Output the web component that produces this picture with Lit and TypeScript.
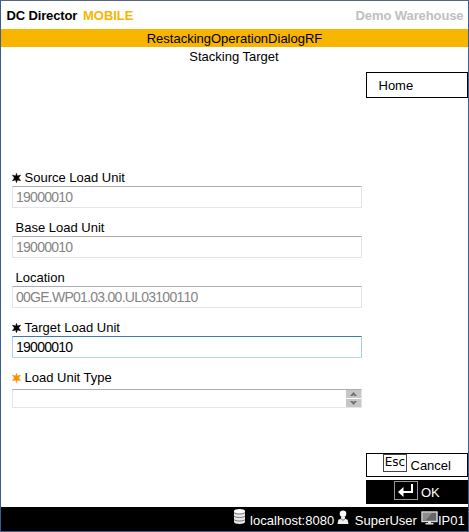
import { LitElement, html, css, nothing } from "lit";
import { customElement, property } from "lit/decorators.js";

const star = (color: string) => html`<svg class="star" width="9" height="10" viewBox="0 0 9 10">
  <path fill=${color} stroke=${color} stroke-width=".5" stroke-linejoin="round" d="M4.5 .3 5.4 2.9 8.6 2.1 6.6 4.9 8.6 7.7 5.4 7 4.5 9.7 3.6 7 .4 7.7 2.4 4.9 .4 2.1 3.6 2.9Z"/>
</svg>`;

@customElement("load-field")
class LoadField extends LitElement {
  @property() label = "";
  @property() value = "";
  @property() mark = "";
  @property() kind = "disabled";

  static styles = css`
    :host { display: block; height: 50px; }
    .label { display: flex; align-items: center; height: 16px; gap: 3.5px; padding-left: 3.5px; white-space: nowrap; }
    .label.marked { padding-left: 0; }
    .star { display: block; margin-top: -1px; }
    .box { box-sizing: border-box; width: 350px; height: 22px; padding-left: 3px;
      border: 1px solid #e3e3eb; border-top-color: #abadb3; border-radius: 1px; background: #fff;
      color: #858585; font-size: 14px; line-height: 21px; letter-spacing: -0.74px; font-kerning: none; white-space: nowrap; }
    .active { color: #000; border-color: #3d7bad #a4c9e3 #b7d9ed #b5cfe7; }
    .select { display: flex; justify-content: flex-end; height: 19px; margin-top: 3px; }
    .steps { display: flex; flex-direction: column; gap: 1px; width: 15px; }
    .steps svg { display: block; }
  `;

  render() {
    return html`
      <div class="label ${this.mark ? "marked" : ""}">
        ${this.mark ? star(this.mark) : nothing}<span>${this.label}</span>
      </div>
      <div class="box ${this.kind}">
        ${this.kind === "select"
          ? html`<div class="steps">
              <svg width="15" height="8"><rect width="15" height="8" fill="#c6c6c6"/><path d="M4 6 7.5 2 11 6 8.5 6 7.5 5 6.5 6Z" fill="#707070"/></svg>
              <svg width="15" height="8"><rect width="15" height="8" fill="#c6c6c6"/><path d="M4 2 6.5 2 7.5 3 8.5 2 11 2 7.5 6Z" fill="#707070"/></svg>
            </div>`
          : this.value}
      </div>`;
  }
}

@customElement("app-root")
class AppRoot extends LitElement {
  static styles = css`
    :host { display: block; font: 13px/16px "Liberation Sans", Arial, sans-serif; color: #000; }
    .frame { box-sizing: border-box; display: flex; flex-direction: column; width: 469px; height: 532px;
      border: 1px solid #3a5c92; border-top-color: #54657f; background: #fff; white-space: nowrap; }
    header { display: flex; justify-content: space-between; box-sizing: border-box; height: 28px; padding: 7px 4.5px 0 5.5px; font-weight: bold; }
    .brand { display: flex; gap: 6px; letter-spacing: -0.15px; }
    .mobile { color: #f7b500; letter-spacing: -0.05px; }
    .site { color: #c0c0c0; letter-spacing: -0.1px; }
    .title { height: 18px; background: #f7b500; text-align: center; line-height: 19px; }
    .subtitle { height: 18px; padding-right: 1px; text-align: center; line-height: 19px; }
    main { display: flex; justify-content: space-between; height: 442px; }
    .fields { padding: 105px 0 0 11px; }
    .side { display: flex; flex-direction: column; width: 102px; padding-top: 7px; height: 432px; }
    .button { box-sizing: border-box; display: flex; align-items: center; border: 1px solid #000; height: 24px; }
    .home { height: 26px; padding: 1px 0 0 11.5px; }
    .cancel { margin-top: auto; padding-left: 16px; gap: 3.5px; }
    .ok { margin-top: 3px; padding-left: 27px; gap: 3px; background: #000; color: #fff; }
    .caption { padding-top: 2px; }
    .ok svg { display: block; margin-top: -3px; }
    .key { box-sizing: border-box; width: 24px; height: 18px; margin-top: -4px; border: 1px solid #444;
      font: 12px/15px "DejaVu Sans", sans-serif; text-align: center; }
    footer { display: flex; align-items: flex-start; box-sizing: border-box; height: 24px; padding-left: 232px; background: #000; color: #fff; line-height: 28px; }
    footer svg { display: block; flex: none; }
    .disks { margin-top: 1px; }
    .host { margin-left: 4px; letter-spacing: 0.03px; }
    .person { margin: 3px 0 0 3px; }
    .user { margin-left: 5.5px; }
    .screen { margin: 4px 0 0 4px; }
  `;

  render() {
    return html`<div class="frame">
      <header>
        <div class="brand"><span>DC Director</span><span class="mobile">MOBILE</span></div>
        <span class="site">Demo Warehouse</span>
      </header>
      <div class="title">RestackingOperationDialogRF</div>
      <div class="subtitle">Stacking Target</div>
      <main>
        <div class="fields">
          <load-field label="Source Load Unit" value="19000010" mark="#000"></load-field>
          <load-field label="Base Load Unit" value="19000010"></load-field>
          <load-field label="Location" value="00GE.WP01.03.00.UL03100110"></load-field>
          <load-field label="Target Load Unit" value="19000010" mark="#000" kind="active"></load-field>
          <load-field label="Load Unit Type" mark="#ff9000" kind="select"></load-field>
        </div>
        <div class="side">
          <div class="button home">Home</div>
          <div class="button cancel"><span class="key">Esc</span><span class="caption">Cancel</span></div>
          <div class="button ok">
            <svg width="24" height="19" viewBox="0 0 24 19">
              <rect x=".5" y=".5" width="23" height="18" fill="#000" stroke="#999"/>
              <path d="M18 3v8H8" fill="none" stroke="#fff" stroke-width="2"/>
              <path d="M4 11 9.5 6v10Z" fill="#fff"/>
            </svg><span class="caption">OK</span>
          </div>
        </div>
      </main>
      <footer>
        <svg class="disks" width="13" height="17" viewBox="0 0 13 17">
          <path d="M1 3v11c0 2.6 11 2.6 11 0V3Z" fill="#e8e8e8"/>
          <ellipse cx="6.5" cy="3" rx="5.5" ry="2" fill="#fff"/>
          <path d="M1 4.5c1 2 10 2 11 0M1 8c1 2 10 2 11 0M1 11.5c1 2 10 2 11 0" fill="none" stroke="#666" stroke-width=".9"/>
        </svg>
        <span class="host">localhost:8080</span>
        <svg class="person" width="12" height="15" viewBox="0 0 12 15">
          <circle cx="6" cy="3.8" r="3.3" fill="#fff"/>
          <path d="M4 6.5h4v2.2l2.6 1.1L11.5 14H.5l.9-4.2L4 8.7Z" fill="#eee"/>
          <path d="M3.8 8.8 6 10.3l2.2-1.5" stroke="#777" fill="none"/>
        </svg>
        <span class="user">SuperUser</span>
        <svg class="screen" width="17" height="14" viewBox="0 0 17 14">
          <rect x="1" y="1" width="15" height="9.5" fill="#666" stroke="#ddd" stroke-width="1.4"/>
          <path d="M2 2h9L5 9H2Z" fill="#8c8c8c"/>
          <path d="M7 11h3v1h2.5v1.5h-8V12H7Z" fill="#ddd"/>
        </svg>
        <span>IP01</span>
      </footer>
    </div>`;
  }
}
